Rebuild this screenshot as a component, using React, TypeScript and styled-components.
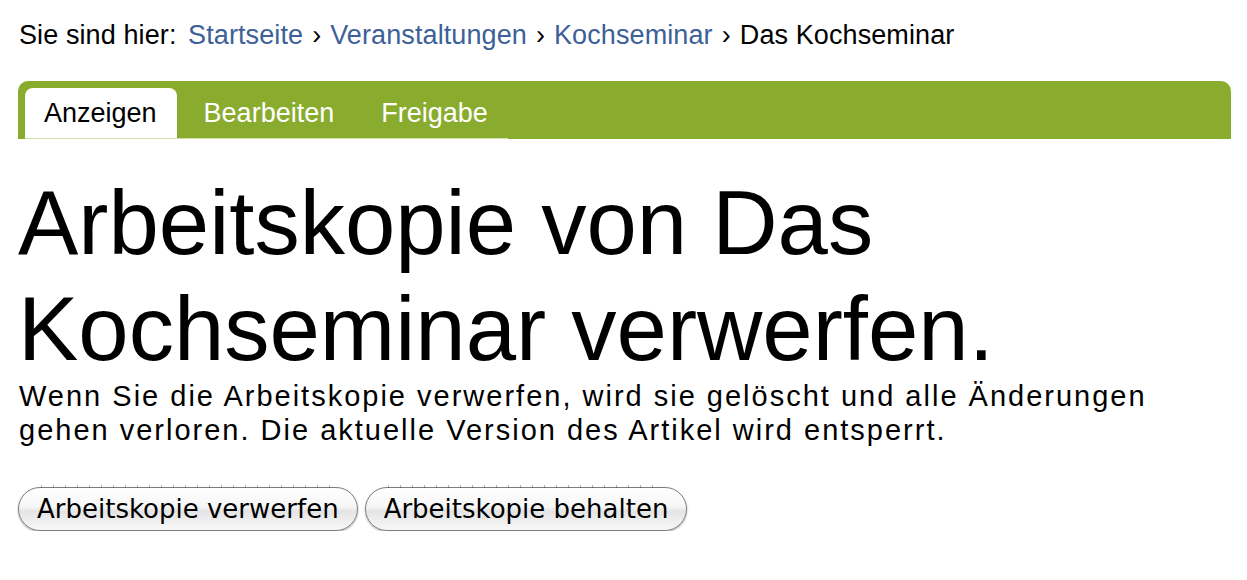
import React from "react";
import styled, { createGlobalStyle } from "styled-components";

const Global = createGlobalStyle`
  html, body { margin: 0; padding: 0; background: #fff; }
  body { font-family: "Liberation Sans", Arial, sans-serif; color: #000; }
`;

const Page = styled.div`
  padding: 20px 16px 0 18px;
`;

const Breadcrumb = styled.div`
  font-size: 27px;
  line-height: 31px;
  padding-left: 1px;
  letter-spacing: 0.1px;
`;

const Crumb = styled.a`
  color: #3d6098;
  text-decoration: none;
`;

const Sep = styled.span`
  margin: 0 9px;
`;

const Lead = styled.span`
  margin-right: 4px;
`;

const TabBar = styled.div`
  margin-top: 30px;
  background: #89ac2e;
  border-radius: 10px 10px 0 0;
  padding: 7px 0 0 7px;
  display: flex;
`;

const TabList = styled.ul`
  list-style: none;
  margin: 0;
  padding: 0;
  display: flex;
  gap: 8px;
  border-bottom: 1px solid #cfe0a8;
`;

const Tab = styled.li<{ $active?: boolean }>`
  height: 50px;
  padding: 0 20px 0 19px;
  display: flex;
  align-items: center;
  font-size: 27px;
  border-radius: 8px 8px 0 0;
  background: ${(p) => (p.$active ? "#fff" : "transparent")};
  color: ${(p) => (p.$active ? "#000" : "#fff")};
`;

const Title = styled.h1`
  margin: 31px 0 0 0;
  font-size: 90.5px;
  line-height: 106px;
  font-weight: normal;
`;

const Text = styled.p`
  margin: -3px 0 0 0;
  font-size: 29px;
  line-height: 34px;
  letter-spacing: 2px;
  padding-left: 1px;
`;

const Buttons = styled.div`
  display: flex;
  gap: 7px;
  margin-top: 40px;
`;

const Button = styled.button`
  position: relative;
  height: 44px;
  padding: 0 18px;
  border-radius: 22px;
  border: 1px solid #7d7d7d;
  background: linear-gradient(#ffffff 0%, #f6f6f6 45%, #e4e4e4 55%, #f8f8f8 100%);
  box-shadow: inset 0 1px 1px #fff, 0 1px 2px rgba(0, 0, 0, 0.35);
  font-family: "DejaVu Sans", "Liberation Sans", sans-serif;
  font-size: 26px;
  color: #000;
  letter-spacing: 0;

  &::before,
  &::after {
    content: "";
    position: absolute;
    left: 22px;
    right: 22px;
    height: 3px;
    background: repeating-linear-gradient(
      to right,
      rgba(0, 0, 0, 0.28) 0 1px,
      transparent 1px 12px
    );
  }
  &::before {
    top: -3px;
  }
  &::after {
    bottom: -4px;
  }
`;

export default function App() {
  return (
    <Page>
      <Global />
      <Breadcrumb>
        <Lead>Sie sind hier:</Lead> <Crumb href="#">Startseite</Crumb>
        <Sep>›</Sep>
        <Crumb href="#">Veranstaltungen</Crumb>
        <Sep>›</Sep>
        <Crumb href="#">Kochseminar</Crumb>
        <Sep>›</Sep>
        Das Kochseminar
      </Breadcrumb>
      <TabBar>
        <TabList>
          <Tab $active>Anzeigen</Tab>
          <Tab>Bearbeiten</Tab>
          <Tab>Freigabe</Tab>
        </TabList>
      </TabBar>
      <Title>
        Arbeitskopie von Das
        <br />
        Kochseminar verwerfen.
      </Title>
      <Text>
        Wenn Sie die Arbeitskopie verwerfen, wird sie gelöscht und alle Änderungen
        <br />
        gehen verloren. Die aktuelle Version des Artikel wird entsperrt.
      </Text>
      <Buttons>
        <Button>Arbeitskopie verwerfen</Button>
        <Button>Arbeitskopie behalten</Button>
      </Buttons>
    </Page>
  );
}
